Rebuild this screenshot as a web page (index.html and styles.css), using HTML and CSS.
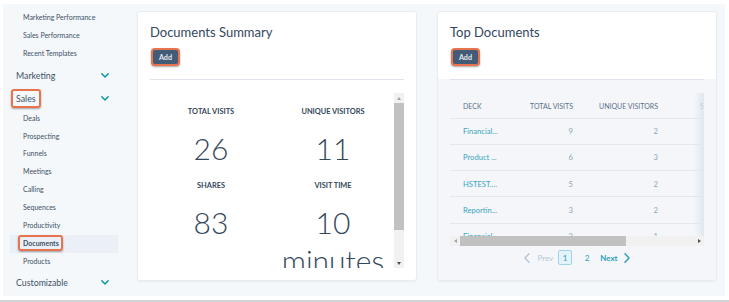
FILE: index.html
```html
<!DOCTYPE html>
<html>
<head>
<meta charset="utf-8">
<link rel="stylesheet" href="styles.css">
</head>
<body>
<div class="frame">
  <div class="screen">
    <nav class="sidebar">
      <div class="sub">Marketing Performance</div>
      <div class="sub">Sales Performance</div>
      <div class="sub">Recent Templates</div>
      <div class="group first"><span>Marketing</span><svg class="chev" viewBox="0 0 8 5"><path d="M0.8 0.8 L4 4 L7.2 0.8"/></svg></div>
      <div class="group"><span class="mark">Sales</span><svg class="chev" viewBox="0 0 8 5"><path d="M0.8 0.8 L4 4 L7.2 0.8"/></svg></div>
      <div class="sub">Deals</div>
      <div class="sub">Prospecting</div>
      <div class="sub">Funnels</div>
      <div class="sub">Meetings</div>
      <div class="sub">Calling</div>
      <div class="sub">Sequences</div>
      <div class="sub">Productivity</div>
      <div class="sub active"><span class="mark">Documents</span></div>
      <div class="sub">Products</div>
      <div class="group"><span>Customizable</span><svg class="chev" viewBox="0 0 8 5"><path d="M0.8 0.8 L4 4 L7.2 0.8"/></svg></div>
    </nav>
    <main class="main">
      <section class="card">
        <div class="card-head">
          <h2 class="card-title">Documents Summary</h2>
          <button class="add-btn">Add</button>
        </div>
        <div class="card-body">
          <div class="divider"></div>
          <div class="stats-scroll">
            <div class="stats">
              <div class="stat">
                <div class="stat-label">Total Visits</div>
                <div class="stat-value">26</div>
              </div>
              <div class="stat">
                <div class="stat-label">Unique Visitors</div>
                <div class="stat-value">11</div>
              </div>
              <div class="stat">
                <div class="stat-label">Shares</div>
                <div class="stat-value">83</div>
              </div>
              <div class="stat">
                <div class="stat-label">Visit Time</div>
                <div class="stat-value">10 minutes</div>
              </div>
            </div>
            <div class="vscroll">
              <div class="sb-arrow"><span class="tri-up"></span></div>
              <div class="sb-thumb"></div>
              <div class="sb-track"></div>
              <div class="sb-arrow"><span class="tri-down"></span></div>
            </div>
          </div>
        </div>
      </section>
      <section class="card card-table">
        <div class="card-head">
          <h2 class="card-title">Top Documents</h2>
          <button class="add-btn">Add</button>
        </div>
        <div class="card-body">
          <div class="divider"></div>
          <div class="table-wrap">
            <div class="table-clip">
              <table class="docs">
                <colgroup>
                  <col class="c1"><col class="c2"><col class="c3"><col class="c4">
                </colgroup>
                <thead>
                  <tr><th class="l">Deck</th><th>Total Visits</th><th>Unique Visitors</th><th class="l s">Shares</th></tr>
                </thead>
                <tbody>
                  <tr><td class="l link">Financial...</td><td>9</td><td>2</td><td></td></tr>
                  <tr><td class="l link">Product ...</td><td>6</td><td>3</td><td></td></tr>
                  <tr><td class="l link">HSTEST....</td><td>5</td><td>2</td><td></td></tr>
                  <tr><td class="l link">Reportin...</td><td>3</td><td>2</td><td></td></tr>
                  <tr><td class="l link">Financial...</td><td>2</td><td>1</td><td></td></tr>
                </tbody>
              </table>
              <div class="edge-shadow"></div>
            </div>
            <div class="hscroll">
              <div class="hs-arrow"><span class="tri-left"></span></div>
              <div class="hs-thumb"></div>
              <div class="hs-track"></div>
              <div class="hs-arrow"><span class="tri-right"></span></div>
            </div>
          </div>
          <div class="pager">
            <svg class="pchev prev" viewBox="0 0 6 10"><path d="M5 0.8 L1 5 L5 9.2"/></svg>
            <span class="p-prev">Prev</span>
            <span class="p-num current">1</span>
            <span class="p-num">2</span>
            <span class="p-next">Next</span>
            <svg class="pchev next" viewBox="0 0 6 10"><path d="M1 0.8 L5 5 L1 9.2"/></svg>
          </div>
        </div>
      </section>
    </main>
  </div>
  <div class="rule"></div>
</div>
</body>
</html>
```

FILE: styles.css
```css
* { box-sizing: border-box; }
html, body { margin: 0; padding: 0; background: #ffffff; }
body { font-family: Lato, "Open Sans", sans-serif; color: #33475b; }

.frame { width: 729px; height: 302px; overflow: hidden; background: #fff; }

.screen {
  margin: 4px 4px 0 3px;
  height: 292px;
  background: #f5f8fa;
  display: flex;
}

.rule { margin-top: 4px; height: 2px; background: #cfd3d7; }

/* sidebar */
.sidebar {
  width: 127px;
  flex: none;
  padding-top: 5px;
  display: flex;
  flex-direction: column;
}
.sub {
  height: 17.9px;
  line-height: 17.9px;
  font-size: 7px;
  padding-left: 20px;
  color: #3d5166;
  white-space: nowrap;
}
.group {
  height: 22px;
  display: flex;
  align-items: center;
  justify-content: space-between;
  padding: 0 21px 0 13px;
  font-size: 8.8px;
  color: #3d5166;
  margin-top: 1px;
}
.group.first { margin-top: 2px; }
.chev { width: 8px; height: 5px; fill: none; stroke: #0091ae; stroke-width: 1.4; stroke-linecap: round; stroke-linejoin: round; }

.sub.active {
  background: #eaf0f6;
  margin: 0 12px 0 7px;
  padding-left: 13px;
  font-weight: 700;
}

.mark { position: relative; }
.mark::after {
  content: "";
  position: absolute;
  left: -5px; right: -5px; top: -4px; bottom: -4px;
  border: 2px solid #e8734f;
  border-radius: 3px;
  box-shadow: 0 1px 2px rgba(0,0,0,0.35);
}
.sub.active .mark::after { left: -5px; right: -4px; top: -4px; bottom: -4px; }

/* main */
.main {
  flex: 1;
  display: flex;
  gap: 20px;
  padding: 7px 8px 0 7px;
}
.card {
  width: 280px;
  height: 270px;
  background: #fff;
  border: 1px solid #e8edf2;
  border-radius: 3px;
  box-shadow: 0 1px 2px rgba(45,62,80,0.06);
  display: flex;
  flex-direction: column;
}
.card-head { padding: 11px 12px 13px; }
.card-title {
  margin: 0;
  font-size: 13px;
  line-height: 18px;
  font-weight: 400;
  color: #33475b;
}
.add-btn {
  display: block;
  margin: 7px 0 0 1px;
  width: 29px;
  height: 18px;
  padding: 0;
  border: 2px solid #e8734f;
  border-radius: 4px;
  background: #425b76;
  color: #e4e9ef;
  font-family: Lato, sans-serif;
  font-size: 7.2px;
  font-weight: 700;
  box-shadow: 0 1px 2px rgba(0,0,0,0.35);
}
.card-body { padding: 0 12px; flex: 1; }
.divider { height: 1px; background: #dfe3eb; }

/* stats */
.stats-scroll {
  margin-top: 13px;
  height: 175px;
  display: flex;
  overflow: hidden;
}
.stats {
  flex: 1;
  display: grid;
  grid-template-columns: 1fr 1fr;
  row-gap: 12px;
  padding-top: 12px;
  align-content: start;
}
.stat { text-align: center; }
.stat-label {
  font-size: 7.4px;
  line-height: 14px;
  font-weight: 700;
  text-transform: uppercase;
  color: #33475b;
}
.stat-value {
  margin-top: 10px;
  font-size: 30px;
  line-height: 38px;
  font-weight: 300;
  color: #33475b;
}
.vscroll {
  width: 10px;
  flex: none;
  display: flex;
  flex-direction: column;
  background: #f1f1f1;
}
.sb-arrow { height: 10px; display: flex; align-items: center; justify-content: center; background: #f1f1f1; }
.sb-thumb { height: 127px; background: #c1c1c1; }
.sb-track { flex: 1; }
.tri-up { width: 0; height: 0; border-left: 2.5px solid transparent; border-right: 2.5px solid transparent; border-bottom: 3px solid #a3a3a3; }
.tri-down { width: 0; height: 0; border-left: 2.5px solid transparent; border-right: 2.5px solid transparent; border-top: 3px solid #505050; }

/* table card */
.card-table { background: #f4f6f9; }
.card-table .card-head { background: #fff; border-radius: 3px 3px 0 0; }
.table-wrap { margin-top: 13px; }
.table-clip {
  position: relative;
  height: 143px;
  overflow: hidden;
}
.docs {
  width: 320px;
  table-layout: fixed;
  border-collapse: collapse;
}
.c1 { width: 70px; }
.c2 { width: 65px; }
.c3 { width: 85px; }
.c4 { width: 100px; }
.docs th {
  height: 25px;
  font-size: 7px;
  font-weight: 400;
  text-transform: uppercase;
  color: #5d7189;
  text-align: right;
  padding: 1px 12px 0 0;
  border-bottom: 1px solid #e3e8ee;
  white-space: nowrap;
}
.docs td {
  height: 26.3px;
  font-size: 7.6px;
  color: #8fa3b8;
  text-align: right;
  padding: 0 12px 0 0;
  border-bottom: 1px solid #e3e8ee;
  white-space: nowrap;
}
.docs .l { text-align: left; padding: 0 0 0 13px; }
.docs th.l { padding-top: 1px; }
.docs th.s { padding-left: 30px; }
.docs td.link { color: #3aa5c1; }
.edge-shadow {
  position: absolute;
  right: 0; top: 0; bottom: 0;
  width: 10px;
  background: linear-gradient(to right, rgba(223,230,238,0), rgba(223,230,238,0.95));
}
.hscroll {
  height: 10px;
  display: flex;
  background: #f1f1f1;
}
.hs-arrow { width: 10px; display: flex; align-items: center; justify-content: center; }
.hs-thumb { width: 166px; background: #c1c1c1; }
.hs-track { flex: 1; }
.tri-left { width: 0; height: 0; border-top: 2.5px solid transparent; border-bottom: 2.5px solid transparent; border-right: 3px solid #a3a3a3; }
.tri-right { width: 0; height: 0; border-top: 2.5px solid transparent; border-bottom: 2.5px solid transparent; border-left: 3px solid #505050; }

.pager {
  margin-top: 4px;
  height: 15px;
  display: flex;
  align-items: center;
  justify-content: center;
  font-size: 8px;
}
.pchev { width: 6px; height: 10px; fill: none; stroke-width: 1.5; stroke-linecap: round; stroke-linejoin: round; }
.pchev.prev { stroke: #b6c6d6; margin-right: 7px; }
.pchev.next { stroke: #2d9fbc; margin-left: 6px; }
.p-prev { color: #b6c6d6; margin-right: 5px; }
.p-num { color: #2d9fbc; width: 14px; height: 15px; display: flex; align-items: center; justify-content: center; margin-right: 6px; }
.p-num.current { background: #e3f3f8; border: 1px solid #9fd5e3; border-radius: 2px; margin-right: 8px; }
.p-next { color: #2d9fbc; font-weight: 700; }
```
